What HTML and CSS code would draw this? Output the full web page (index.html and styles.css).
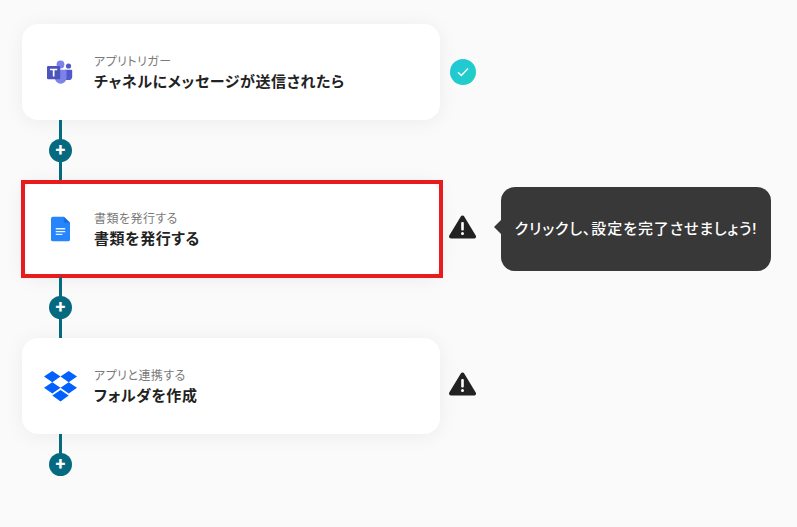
FILE: index.html
```html
<!DOCTYPE html>
<html lang="ja">
<head>
  <meta charset="UTF-8" />
  <meta name="viewport" content="width=device-width, initial-scale=1.0"/>
  <title>フローボット</title>
  <link rel="stylesheet" href="styles.css">
</head>
<body>

<div class="flow">

  <!-- Step 1 -->
  <div class="step">
    <div class="card">
      <div class="card-icon">
        <svg width="26" height="24" viewBox="0 0 26 24">
          <circle cx="21.5" cy="6" r="2.6" fill="#5059c9"/>
          <path d="M18 9.8h6.2a1 1 0 0 1 1 1v5.6a3.7 3.7 0 0 1-3.7 3.7H18z" fill="#5059c9"/>
          <circle cx="13.5" cy="4.5" r="3.9" fill="#7b83eb"/>
          <path d="M7.5 9.8h11a1 1 0 0 1 1 1v7.2a5.8 5.8 0 0 1-11.6 0z" fill="#7b83eb"/>
          <rect x="0" y="6" width="13.2" height="13.2" rx="1.2" fill="#4b53bc"/>
          <path d="M3 8.8h7.2v1.5H7.5v6.1H5.8v-6.1H3z" fill="#fff"/>
        </svg>
      </div>
      <div class="card-text">
        <p class="card-label">アプリトリガー</p>
        <p class="card-title">チャネルにメッセージが送信されたら</p>
      </div>
    </div>
    <div class="status status-ok">
      <svg width="12" height="10" viewBox="0 0 12 10"><path d="M1 5.2l3.4 3.2L11 1.4" fill="none" stroke="#fff" stroke-width="1.4"/></svg>
    </div>
  </div>

  <div class="connector">
    <div class="plus">+</div>
  </div>

  <!-- Step 2 -->
  <div class="step">
    <div class="card card-selected">
      <div class="card-icon">
        <svg width="19" height="26" viewBox="0 0 20 26">
          <path d="M2 0h11.5L20 6.5V24a2 2 0 0 1-2 2H2a2 2 0 0 1-2-2V2a2 2 0 0 1 2-2z" fill="#2684fc"/>
          <path d="M13.5 0L20 6.5h-4.5a2 2 0 0 1-2-2z" fill="#1a6dd8"/>
          <path d="M5 12h10v1.4H5zM5 15h10v1.4H5zM5 18h7v1.4H5z" fill="#e8f1fe"/>
        </svg>
      </div>
      <div class="card-text">
        <p class="card-label">書類を発行する</p>
        <p class="card-title">書類を発行する</p>
      </div>
    </div>
    <div class="status">
      <svg class="warn" width="27" height="24" viewBox="0 0 27 24">
        <path d="M13.5 2.5L25 21.5H2z" fill="#222" stroke="#222" stroke-width="4" stroke-linejoin="round"/>
        <rect x="12.2" y="7" width="2.6" height="8.5" rx="1" fill="#fff"/>
        <circle cx="13.5" cy="18.5" r="1.5" fill="#fff"/>
      </svg>
    </div>
    <div class="tooltip">クリックし、設定を完了させましょう!</div>
  </div>

  <div class="connector">
    <div class="plus">+</div>
  </div>

  <!-- Step 3 -->
  <div class="step">
    <div class="card">
      <div class="card-icon">
        <svg width="33" height="31" viewBox="0 0 33 31">
          <path d="M8.3 0l8.2 5.6-8.2 5.6L0 5.6zM24.7 0l8.3 5.6-8.3 5.6-8.2-5.6zM0 16.8l8.3-5.6 8.2 5.6-8.2 5.6zM24.7 11.2l8.3 5.6-8.3 5.6-8.2-5.6zM8.3 24.6l8.2-5.6 8.2 5.6-8.2 5.9z" fill="#0061ff"/>
        </svg>
      </div>
      <div class="card-text">
        <p class="card-label">アプリと連携する</p>
        <p class="card-title">フォルダを作成</p>
      </div>
    </div>
    <div class="status">
      <svg class="warn" width="27" height="24" viewBox="0 0 27 24">
        <path d="M13.5 2.5L25 21.5H2z" fill="#222" stroke="#222" stroke-width="4" stroke-linejoin="round"/>
        <rect x="12.2" y="7" width="2.6" height="8.5" rx="1" fill="#fff"/>
        <circle cx="13.5" cy="18.5" r="1.5" fill="#fff"/>
      </svg>
    </div>
  </div>

  <div class="connector connector-end">
    <div class="plus">+</div>
  </div>

</div>

</body>
</html>
```

FILE: styles.css
```css
:root {
  --teal: #056a80;
  --red: #e81c1c;
}

* {
  box-sizing: border-box;
  font-family: Roboto, 'Noto Sans CJK JP', sans-serif;
}

html, body {
  height: 100%;
}

body {
  margin: 0;
  padding: 24px 0 0 22px;
  background-color: #fafafa;
  overflow: hidden;
}

.step {
  display: flex;
  align-items: center;
  position: relative;
}

.card {
  position: relative;
  display: flex;
  align-items: center;
  width: 418px;
  height: 96px;
  background: white;
  border-radius: 16px;
  box-shadow: 0 2px 20px rgba(0,0,0,0.06);
}

.card-selected::after {
  content: "";
  position: absolute;
  top: -1px;
  left: -1px;
  right: -3px;
  bottom: -1px;
  border: 4px solid var(--red);
}

.card-icon {
  width: 72px;
  display: flex;
  justify-content: center;
  flex-shrink: 0;
  padding-left: 4px;
}

.card-text {
  padding-top: 2px;
}

.card-label {
  margin: 0 0 1px;
  font-size: 12px;
  line-height: 16px;
  letter-spacing: 0.45px;
  color: #7a7a7a;
  font-feature-settings: "palt";
}

.card-title {
  margin: 0;
  font-size: 15px;
  line-height: 22px;
  font-weight: 700;
  letter-spacing: 0.6px;
  color: #222;
  font-feature-settings: "palt";
}

.status {
  width: 27px;
  margin-left: 9px;
  margin-top: -4px;
  display: flex;
  justify-content: center;
}

.status-ok {
  width: 26px;
  height: 26px;
  margin-left: 10px;
  margin-top: 0;
  border-radius: 50%;
  align-items: center;
  background: linear-gradient(135deg, #22c7dc, #1fd0c0);
}

.tooltip {
  position: absolute;
  left: 479px;
  top: 6px;
  width: 270px;
  height: 84px;
  padding-bottom: 3px;
  display: flex;
  align-items: center;
  justify-content: center;
  background: #383838;
  border-radius: 14px;
  color: white;
  font-size: 15px;
  font-weight: 500;
  letter-spacing: 0.9px;
  font-feature-settings: "palt";
}

.tooltip::before {
  content: "";
  position: absolute;
  left: -7px;
  top: 33px;
  width: 14px;
  height: 14px;
  background: #383838;
  clip-path: polygon(50% 0, 50% 100%, 0 50%);
}

.connector {
  position: relative;
  width: 77px;
  height: 61px;
  display: flex;
  align-items: center;
  justify-content: center;
}

.connector::before {
  content: "";
  position: absolute;
  top: 0;
  bottom: 0;
  left: 37px;
  width: 3px;
  background: var(--teal);
}

.plus {
  position: relative;
  width: 23px;
  height: 23px;
  border-radius: 50%;
  background: var(--teal);
  color: white;
  font-size: 18px;
  font-weight: 700;
  line-height: 22px;
  text-align: center;
}

.connector-end {
  height: 42px;
  align-items: flex-end;
}

.connector-end::before {
  bottom: 12px;
}
```
